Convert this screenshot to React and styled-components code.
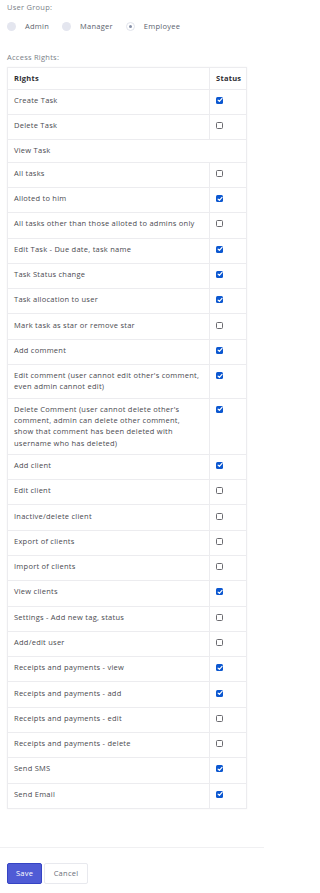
import React, { useState } from "react";
import styled, { createGlobalStyle } from "styled-components";

const GlobalStyle = createGlobalStyle`
  html, body {
    margin: 0;
    padding: 0;
    background: #fff;
  }
  body {
    font-family: "Open Sans", "Liberation Sans", sans-serif;
    -webkit-font-smoothing: antialiased;
  }
`;

const rightsList = [
  { label: "Create Task", checked: true },
  { label: "Delete Task", checked: false },
  { label: "View Task", group: true },
  { label: "All tasks", checked: false },
  { label: "Alloted to him", checked: true },
  { label: "All tasks other than those alloted to admins only", checked: false },
  { label: "Edit Task - Due date, task name", checked: true },
  { label: "Task Status change", checked: true },
  { label: "Task allocation to user", checked: true },
  { label: "Mark task as star or remove star", checked: false },
  { label: "Add comment", checked: true },
  {
    label: "Edit comment (user cannot edit other's comment, even admin cannot edit)",
    checked: true,
  },
  {
    label:
      "Delete Comment (user cannot delete other's comment, admin can delete other comment, show that comment has been deleted with username who has deleted)",
    checked: true,
  },
  { label: "Add client", checked: true },
  { label: "Edit client", checked: false },
  { label: "Inactive/delete client", checked: false },
  { label: "Export of clients", checked: false },
  { label: "Import of clients", checked: false },
  { label: "View clients", checked: true },
  { label: "Settings - Add new tag, status", checked: false },
  { label: "Add/edit user", checked: false },
  { label: "Receipts and payments - view", checked: true },
  { label: "Receipts and payments - add", checked: true },
  { label: "Receipts and payments - edit", checked: false },
  { label: "Receipts and payments - delete", checked: false },
  { label: "Send SMS", checked: true },
  { label: "Send Email", checked: true },
];

const groups = ["Admin", "Manager", "Employee"];

const App = () => {
  const [group, setGroup] = useState("Employee");
  const [rights, setRights] = useState(rightsList);

  const toggle = (idx) => {
    setRights(rights.map((r, i) => (i === idx ? { ...r, checked: !r.checked } : r)));
  };

  return (
    <>
      <GlobalStyle />
      <Page>
        <Section>
          <FieldLabel>User Group:</FieldLabel>
          <RadioRow>
            {groups.map((g) => (
              <RadioItem key={g} onClick={() => setGroup(g)}>
                <RadioDot $active={group === g} />
                <span>{g}</span>
              </RadioItem>
            ))}
          </RadioRow>
        </Section>

        <Section $top={19}>
          <FieldLabel>Access Rights:</FieldLabel>
          <Table>
            <thead>
              <tr>
                <Th>Rights</Th>
                <Th $status>Status</Th>
              </tr>
            </thead>
            <tbody>
              {rights.map((r, i) =>
                r.group ? (
                  <tr key={r.label}>
                    <Td colSpan={2}>{r.label}</Td>
                  </tr>
                ) : (
                  <tr key={r.label}>
                    <Td>{r.label}</Td>
                    <Td $status>
                      <CheckWrap>
                        <Check $checked={r.checked} onClick={() => toggle(i)}>
                          {r.checked && (
                            <svg width="6" height="6" viewBox="0 0 10 10">
                              <path
                                d="M1.8 5.2 L4 7.4 L8.4 2.4"
                                fill="none"
                                stroke="#fff"
                                strokeWidth="2"
                                strokeLinecap="round"
                                strokeLinejoin="round"
                              />
                            </svg>
                          )}
                        </Check>
                      </CheckWrap>
                    </Td>
                  </tr>
                )
              )}
            </tbody>
          </Table>
        </Section>

        <Footer>
          <SaveBtn>Save</SaveBtn>
          <CancelBtn>Cancel</CancelBtn>
        </Footer>
      </Page>
    </>
  );
};

export default App;

const Page = styled.div`
  width: 264px;
  box-sizing: border-box;
  padding-top: 2px;
  color: #4a4a4a;
  font-size: 7.5px;
  line-height: 11.25px;
  letter-spacing: 0.25px;
`;

const Section = styled.div`
  padding: 0 17px 0 7px;
  margin-top: ${(p) => p.$top || 0}px;
`;

const FieldLabel = styled.div`
  color: #7b7f88;
  margin-bottom: 4px;
`;

const RadioRow = styled.div`
  display: flex;
  align-items: center;
  gap: 13px;
  margin-top: 8px;
`;

const RadioItem = styled.label`
  display: flex;
  align-items: center;
  gap: 9px;
  color: #5a5f6e;
  cursor: pointer;
`;

const RadioDot = styled.span`
  width: 9px;
  height: 9px;
  border-radius: 50%;
  box-sizing: border-box;
  background: ${(p) => (p.$active ? "#fff" : "#e4e6ef")};
  border: ${(p) => (p.$active ? "1px solid #e1e4ec" : "none")};
  display: flex;
  align-items: center;
  justify-content: center;
  &::after {
    content: "";
    display: ${(p) => (p.$active ? "block" : "none")};
    width: 3px;
    height: 3px;
    border-radius: 50%;
    background: #8790a8;
  }
`;

const Table = styled.table`
  width: 240px;
  border-collapse: collapse;
  table-layout: fixed;
  border: 1px solid #ececef;
  box-shadow: 0 0 2px rgba(0, 0, 0, 0.04);
`;

const Th = styled.th`
  text-align: left;
  font-weight: 700;
  color: #2e2e33;
  height: 22px;
  box-sizing: border-box;
  padding: 0 0 0 6px;
  border: 1px solid #ececef;
  width: ${(p) => (p.$status ? "37px" : "auto")};
`;

const Td = styled.td`
  vertical-align: top;
  padding: 5.1px ${(p) => (p.$status ? "0" : "8px")} 5.1px 6px;
  border: 1px solid #ececef;
  color: #4a4a50;
`;

const CheckWrap = styled.div`
  height: 14.1px;
  padding-top: 2px;
  box-sizing: border-box;
`;

const Check = styled.span`
  display: flex;
  align-items: center;
  justify-content: center;
  width: 7px;
  height: 7px;
  box-sizing: border-box;
  border-radius: 1.5px;
  background: ${(p) => (p.$checked ? "#0b57d0" : "#fff")};
  border: ${(p) => (p.$checked ? "none" : "1px solid #6b6b70")};
  cursor: pointer;
`;

const Footer = styled.div`
  margin-top: 38px;
  border-top: 1px solid #f0f0f2;
  padding: 15px 7px 9px;
  display: flex;
  gap: 2px;
`;

const SaveBtn = styled.button`
  width: 35px;
  height: 21px;
  font-family: inherit;
  font-size: 7.5px;
  letter-spacing: 0.25px;
  color: #fff;
  background: #4f5bd5;
  border: 1px solid #3544c4;
  border-radius: 2px;
  padding: 0;
`;

const CancelBtn = styled.button`
  width: 44px;
  height: 21px;
  font-family: inherit;
  font-size: 7.5px;
  letter-spacing: 0.25px;
  color: #6b6f7a;
  background: #fff;
  border: 1px solid #e8e9ee;
  border-radius: 2px;
  padding: 0;
`;
